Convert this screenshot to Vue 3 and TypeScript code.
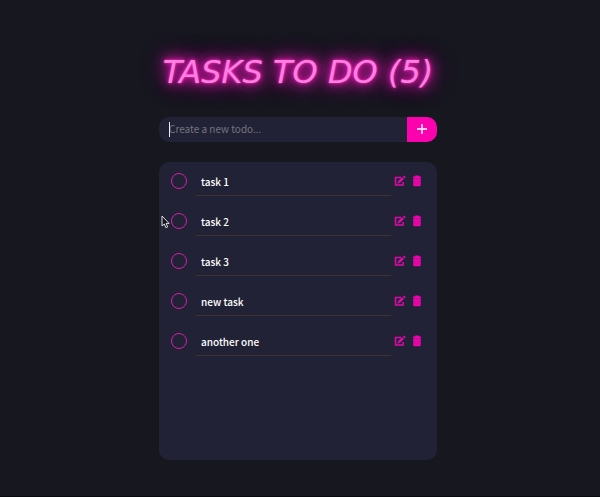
<script setup lang="ts">
import { computed, ref } from 'vue'

interface Task {
  id: number
  text: string
  done: boolean
}

const tasks = ref<Task[]>(
  ['task 1', 'task 2', 'task 3', 'new task', 'another one'].map((text, i) => ({
    id: i + 1,
    text,
    done: false,
  })),
)
const draft = ref<string>('')
const remaining = computed<number>(() => tasks.value.filter((t) => !t.done).length)

function addTask(): void {
  const text = draft.value.trim()
  if (!text) return
  tasks.value.push({ id: Date.now(), text, done: false })
  draft.value = ''
}

function removeTask(id: number): void {
  tasks.value = tasks.value.filter((t) => t.id !== id)
}

function editTask(task: Task): void {
  const text = window.prompt('Edit task', task.text)
  if (text) task.text = text
}
</script>

<template>
  <main class="page">
    <h1 class="title">TASKS TO DO ({{ remaining }})</h1>

    <form class="composer" @submit.prevent="addTask">
      <div class="field">
        <input v-model="draft" type="text" placeholder="Create a new todo..." aria-label="Create a new todo" />
        <span v-if="!draft" class="caret"></span>
      </div>
      <button class="add" type="submit" aria-label="Add task">
        <svg viewBox="0 0 10 10" width="10" height="10"><path d="M5 0v10M0 5h10" stroke="#fff" stroke-width="1.4" /></svg>
      </button>
    </form>

    <div class="board">
      <ul class="list">
        <li v-for="task in tasks" :key="task.id" class="row">
          <input :id="`task-${task.id}`" v-model="task.done" class="check" type="checkbox" />
          <label class="text" :class="{ done: task.done }" :for="`task-${task.id}`">{{ task.text }}</label>
          <div class="actions">
            <button type="button" class="icon" aria-label="Edit task" @click="editTask(task)">
              <svg viewBox="0 0 12 12" width="12" height="12" fill="none" stroke="#e00aa8">
                <path d="M7.2 2.6H1.5v7.3h7.6V7" stroke-width="1.5" />
                <path d="M4.8 7.2 9.2 3" stroke-width="2.5" />
                <path d="m9.9 2.4 1.1-1.1" stroke-width="2.5" />
                <path d="m3.3 8.7.5-2.4 1.9 1.8z" fill="#e00aa8" stroke="none" />
              </svg>
            </button>
            <button type="button" class="icon" aria-label="Delete task" @click="removeTask(task.id)">
              <svg viewBox="0 0 12 12" width="12" height="12">
                <path
                  d="M4.2 1.4V.6h3.6v.8H10v1.5H2V1.4zM2.3 3.3h7.4v6.9a1 1 0 0 1-1 1H3.3a1 1 0 0 1-1-1z"
                  fill="#f205b0"
                />
                <path d="M4.3 5v4.5M6 5v4.5M7.7 5v4.5" stroke="#b80b8d" stroke-width=".5" />
              </svg>
            </button>
          </div>
        </li>
      </ul>
      <svg class="pointer" viewBox="0 0 9 14" width="9" height="14">
        <path
          d="M1 1v10l2.3-2 1.6 3.7 1.8-.8-1.6-3.5h3z"
          fill="#15151d"
          stroke="#dcdce2"
          stroke-width="1"
          stroke-linejoin="round"
        />
      </svg>
    </div>
  </main>
</template>

<style>
body {
  background: #171720;
}
</style>

<style scoped>
* {
  box-sizing: border-box;
}

.page {
  display: flex;
  flex-direction: column;
  align-items: center;
  min-height: 100vh;
  padding: 48px 4px 36px 0;
  border-bottom: 1px solid #08080f;
  background: #171720;
  color: #fff;
  font-family: 'Noto Sans CJK SC', 'Noto Sans', sans-serif;
  font-size: 10px;
}

.title {
  margin: 0 0 21px;
  color: #ff80e0;
  font-family: 'DejaVu Sans', sans-serif;
  font-size: 32px;
  font-style: italic;
  font-weight: 400;
  line-height: 48px;
  white-space: nowrap;
  text-shadow:
    0 0 2px #ff30c4,
    0 0 5px #e81cb0,
    0 0 12px #c818a0,
    0 0 16px #c01898,
    0 0 20px #b01890,
    0 0 26px #701460;
}

.composer {
  display: flex;
  width: 100%;
  max-width: 278px;
  height: 25px;
  margin: 0 0 20px;
  border-radius: 10px;
  overflow: hidden;
  background: #212236;
}

.field {
  position: relative;
  flex: 1;
  min-width: 0;
}

.field input {
  display: block;
  width: 100%;
  height: 23px;
  padding: 0 10px;
  border: 0;
  outline: 0;
  background: transparent;
  color: #fff;
  font: inherit;
}

.field input::placeholder {
  color: #74747e;
  opacity: 1;
}

.caret {
  position: absolute;
  top: 5px;
  left: 10px;
  width: 1px;
  height: 15px;
  background: #e8e8ee;
}

.add {
  display: flex;
  align-items: center;
  justify-content: center;
  width: 30px;
  padding: 0 0 1px;
  border: 0;
  background: #fb02ae;
  cursor: pointer;
}

.board {
  position: relative;
  width: 100%;
  max-width: 278px;
  min-height: 298px;
  border-radius: 10px;
  background: #212236;
}

.list {
  display: grid;
  gap: 12px;
  margin: 0;
  padding: 5px 14px 5px 12px;
  list-style: none;
}

.row {
  display: flex;
  align-items: flex-start;
  height: 28px;
}

.check {
  flex: none;
  appearance: none;
  width: 16px;
  height: 16px;
  margin: 6px 9px 0 0;
  border: 1px solid #d420a4;
  border-radius: 50%;
  cursor: pointer;
}

.check:checked {
  background: #fb02ae;
}

.text {
  flex: 1;
  min-width: 0;
  height: 29px;
  padding: 0 5px;
  border-bottom: 1px solid #3d302f;
  font-weight: 500;
  line-height: 30px;
}

.text.done {
  text-decoration: line-through;
}

.actions {
  display: flex;
  gap: 5px;
  padding: 8px 0 0 3px;
}

.icon {
  display: flex;
  width: 12px;
  height: 12px;
  padding: 0;
  border: 0;
  background: none;
  cursor: pointer;
}

.pointer {
  position: absolute;
  top: 53px;
  left: 2px;
}
</style>
